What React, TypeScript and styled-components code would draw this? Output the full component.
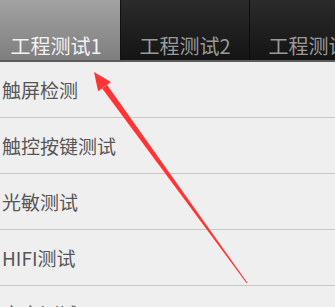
import React from "react";
import styled, { createGlobalStyle } from "styled-components";

const GlobalStyle = createGlobalStyle`
  html, body {
    margin: 0;
    padding: 0;
    background: #efefef;
  }
  body {
    font-family: "Noto Sans CJK SC", "Noto Sans", sans-serif;
  }
`;

const Screen = styled.div`
  position: relative;
  width: 335px;
  height: 307px;
  overflow: hidden;
  background: #efefef;
`;

const Content = styled.div`
  margin-left: -8px;
  width: 400px;
`;

const TabBar = styled.div`
  display: flex;
  height: 60px;
  background: linear-gradient(#2b2b2b, #141414);
  border-bottom: 2px solid #5c5c5c;
`;

const Tab = styled.div<{ $active?: boolean }>`
  flex: 0 0 129px;
  display: flex;
  align-items: flex-end;
  justify-content: center;
  padding-bottom: 2px;
  box-sizing: border-box;
  font-size: 20px;
  line-height: 24px;
  white-space: nowrap;
  color: ${({ $active }) => ($active ? "#f2f2f2" : "#9a9a9a")};
  background: ${({ $active }) =>
    $active ? "linear-gradient(#a2a2a2, #7e7e7e)" : "transparent"};
  border-right: 1px solid ${({ $active }) => ($active ? "#111" : "#0c0c0c")};
`;

const List = styled.div`
  display: flex;
  flex-direction: column;
`;

const Row = styled.div`
  height: 55px;
  display: flex;
  align-items: center;
  padding-left: 10px;
  border-bottom: 1px solid #c6c6c6;
  font-size: 19px;
  color: #565656;
`;

const Overlay = styled.svg`
  position: absolute;
  left: 0;
  top: 0;
  pointer-events: none;
`;

const tabs = ["工程测试1", "工程测试2", "工程测试3"];
const items = ["触屏检测", "触控按键测试", "光敏测试", "HIFI测试", "声音测试"];

export default function App() {
  return (
    <>
      <GlobalStyle />
      <Screen>
        <Content>
          <TabBar>
            {tabs.map((t, i) => (
              <Tab key={t} $active={i === 0}>
                {t}
              </Tab>
            ))}
          </TabBar>
          <List>
            {items.map(item => (
              <Row key={item}>{item}</Row>
            ))}
          </List>
        </Content>
        <Overlay width="335" height="307" viewBox="0 0 335 307">
          <polygon points="94,72 111,81.9 98.1,91.3" fill="#ff3535" />
          <polygon points="107,84.8 247.4,282.7 246.6,283.3 102.2,88.4" fill="#ff3535" />
        </Overlay>
      </Screen>
    </>
  );
}
